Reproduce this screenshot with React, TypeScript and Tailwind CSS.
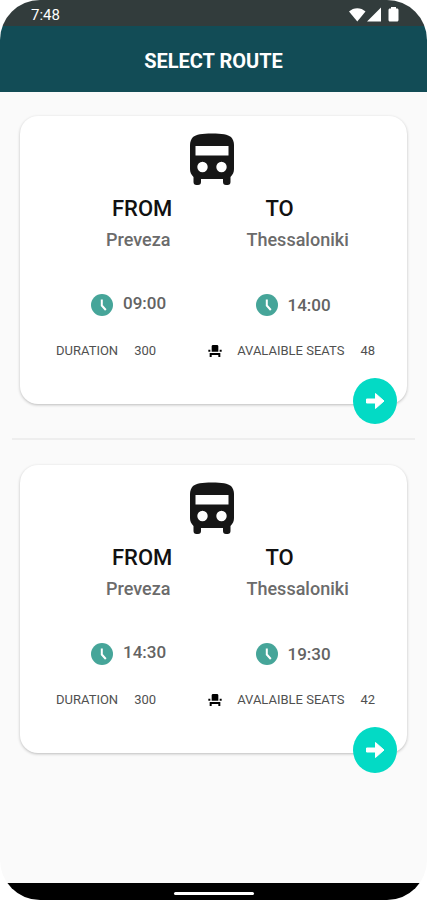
import { MdEventSeat } from "react-icons/md";

type Route = {
  id: number;
  from: string;
  to: string;
  departure: string;
  arrival: string;
  duration: number;
  seats: number;
};

const routes: Route[] = [
  {
    id: 1,
    from: "Preveza",
    to: "Thessaloniki",
    departure: "09:00",
    arrival: "14:00",
    duration: 300,
    seats: 48,
  },
  {
    id: 2,
    from: "Preveza",
    to: "Thessaloniki",
    departure: "14:30",
    arrival: "19:30",
    duration: 300,
    seats: 42,
  },
];

function BusIcon() {
  return (
    <svg viewBox="0 0 44 52" className="h-[52px] w-11" aria-hidden="true">
      <path
        fill="#161616"
        fillRule="evenodd"
        d="M22 .5C12 .5 6 1.500 3 4 1 6 0 9 0 12v24c0 3 1 5.500 3.500 8v5a3 3 0 0 0 3 3H8a3 3 0 0 0 3-3v-3h22v3a3 3 0 0 0 3 3h1.500a3 3 0 0 0 3-3v-5c2.500-2.500 3.500-5 3.500-8V12c0-3-1-6-3-8C38 1.500 32 .5 22 .5zM5.500 13h33v9.500h-33V13zM12.500 28.800a5.200 5.200 0 1 1 0 10.400 5.200 5.200 0 0 1 0-10.400zm19 0a5.200 5.200 0 1 1 0 10.400 5.200 5.200 0 0 1 0-10.400z"
      />
    </svg>
  );
}

function ClockIcon() {
  return (
    <svg viewBox="0 0 22 22" className="size-[22px]" aria-hidden="true">
      <circle cx="11" cy="11" r="11" fill="#46a599" />
      <path d="M10.800 5.500v6l4 4.500" fill="none" stroke="#fff" strokeWidth="2" />
    </svg>
  );
}

function StatusBar() {
  return (
    <div className="flex h-[26px] items-center justify-between bg-[#323c3c] pr-7 pl-[31px] pt-1 text-white">
      <span className="text-[15px] leading-5">7:48</span>
      <svg viewBox="0 0 50 16" className="h-4 w-[50px]" fill="#fff" aria-hidden="true">
        <path d="M0 4.500C4.500 0 12 0 16.500 4.500L8.300 14.500z" />
        <path d="M32 .5v14H18z" />
        <path d="M42 0h5v1.500h1c1 0 1.500.7 1.500 1.500v10c0 .9-.6 1.500-1.500 1.500h-7c-.9 0-1.500-.6-1.500-1.500V3c0-.8.5-1.500 1.500-1.500h1z" />
      </svg>
    </div>
  );
}

function RouteCard({ route }: { route: Route }) {
  return (
    <article className="relative h-72 rounded-[18px] bg-white pt-[17px] shadow-[0_1px_3px_rgba(0,0,0,0.25)]">
      <div className="flex justify-center pr-1">
        <BusIcon />
      </div>

      <div className="mt-2 grid grid-cols-2 text-[22px] leading-8 font-medium text-[#111]">
        <h2 className="pl-[92px]">FROM</h2>
        <h2 className="pl-[52px]">TO</h2>
      </div>
      <div className="grid grid-cols-2 text-lg leading-[30px] font-medium text-[#6b6b6b]">
        <p className="pl-[86px]">{route.from}</p>
        <p className="pl-[33px]">{route.to}</p>
      </div>

      {/* Times */}
      <div className="mt-8 grid grid-cols-2 text-[17px] leading-8 font-medium text-[#636363]">
        <div className="flex items-center gap-[10px] pl-[71px]">
          <ClockIcon />
          <time className="pb-1">{route.departure}</time>
        </div>
        <div className="flex items-center gap-[10px] pl-[42px]">
          <ClockIcon />
          <time>{route.arrival}</time>
        </div>
      </div>

      {/* Details */}
      <div className="mt-4 flex items-center justify-between pr-8 pl-9 text-[13px] leading-6 text-[#505050]">
        <p className="flex gap-4">
          <span>DURATION</span>
          <span>{route.duration}</span>
        </p>
        <p className="flex items-center">
          <MdEventSeat size={16} className="mr-[14px] text-black" />
          <span>AVALAIBLE SEATS</span>
          <span className="ml-4">{route.seats}</span>
        </p>
      </div>

      <button
        type="button"
        aria-label="Select this route"
        className="absolute right-[10px] -bottom-5 flex h-[46px] w-11 items-center justify-center rounded-[50%] bg-[#03dac5]"
      >
        <svg viewBox="0 0 20 18" className="h-[18px] w-5" aria-hidden="true">
          <path
            d="M1.500 7h9V1.500L19 9l-8.500 7.500V11h-9z"
            fill="#fff"
            stroke="#fff"
            strokeWidth="1"
            strokeLinejoin="round"
          />
        </svg>
      </button>
    </article>
  );
}

export default function App() {
  return (
    <div className="min-h-screen bg-white font-[Roboto,sans-serif]">
      <div className="flex min-h-screen flex-col overflow-hidden rounded-[40px] bg-[#fafafa]">
        <StatusBar />
        <header className="flex h-[66px] items-center justify-center bg-[#124c56] pt-1">
          <h1 className="text-xl font-bold text-white">SELECT ROUTE</h1>
        </header>

        <main className="flex-1 px-3 pt-6">
          <ul className="divide-y-2 divide-[#eeeeee]">
            {routes.map((route) => (
              <li key={route.id} className="px-2 pb-[34px] not-first:pt-[25px]">
                <RouteCard route={route} />
              </li>
            ))}
          </ul>
        </main>

        <footer className="flex h-[17px] items-center justify-center bg-black pt-1">
          <div className="h-[3px] w-20 rounded-full bg-white" />
        </footer>
      </div>
    </div>
  );
}
